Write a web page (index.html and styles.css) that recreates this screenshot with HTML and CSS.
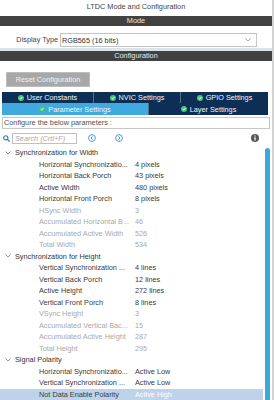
FILE: index.html
```html
<!DOCTYPE html>
<html lang="en">
<head>
  <meta charset="UTF-8" />
  <title>LTDC Mode and Configuration</title>
  <link rel="stylesheet" href="styles.css">
</head>
<body>
<div class="panel">

  <!-- HEADER -->
  <div class="title">LTDC Mode and Configuration</div>
  <div class="bar">Mode</div>
  <div class="mode-row">
    <span class="mode-label">Display Type</span>
    <div class="select">
      <span>RGB565 (16 bits)</span>
      <svg width="6" height="4" viewBox="0 0 6 4"><polyline points="0.5,0.5 3,3 5.5,0.5" fill="none" stroke="#9a9a9a" stroke-width="0.9"/></svg>
    </div>
  </div>
  <div class="strip"></div>
  <div class="bar">Configuration</div>

  <!-- RESET -->
  <div class="reset-row">
    <button class="reset">Reset Configuration</button>
  </div>

  <!-- TABS -->
  <div class="tabs">
    <div class="tab-row top">
      <div class="tab"><svg class="ok" viewBox="0 0 6 6"><circle cx="3" cy="3" r="3" fill="#47c47a"/><polyline points="1.6,3.1 2.7,4.1 4.5,2" fill="none" stroke="#fff" stroke-width="0.9"/></svg>User Constants</div>
      <div class="tab"><svg class="ok" viewBox="0 0 6 6"><circle cx="3" cy="3" r="3" fill="#47c47a"/><polyline points="1.6,3.1 2.7,4.1 4.5,2" fill="none" stroke="#fff" stroke-width="0.9"/></svg>NVIC Settings</div>
      <div class="tab"><svg class="ok" viewBox="0 0 6 6"><circle cx="3" cy="3" r="3" fill="#47c47a"/><polyline points="1.6,3.1 2.7,4.1 4.5,2" fill="none" stroke="#fff" stroke-width="0.9"/></svg>GPIO Settings</div>
    </div>
    <div class="tab-row bottom">
      <div class="tab on"><svg class="ok" viewBox="0 0 6 6"><circle cx="3" cy="3" r="3" fill="#47c47a"/><polyline points="1.6,3.1 2.7,4.1 4.5,2" fill="none" stroke="#fff" stroke-width="0.9"/></svg>Parameter Settings</div>
      <div class="tab"><svg class="ok" viewBox="0 0 6 6"><circle cx="3" cy="3" r="3" fill="#47c47a"/><polyline points="1.6,3.1 2.7,4.1 4.5,2" fill="none" stroke="#fff" stroke-width="0.9"/></svg>Layer Settings</div>
    </div>
  </div>

  <div class="hint">Configure the below parameters :</div>

  <!-- TOOLBAR -->
  <div class="toolbar">
    <svg class="find" width="7" height="7" viewBox="0 0 7 7"><circle cx="2.8" cy="2.8" r="2.1" fill="none" stroke="#2b7fc6" stroke-width="1.1"/><line x1="4.4" y1="4.4" x2="6.6" y2="6.6" stroke="#2b7fc6" stroke-width="1.3"/></svg>
    <div class="search">Search (Crtl+F)</div>
    <svg class="nav prev" width="8" height="8" viewBox="0 0 8 8"><circle cx="4" cy="4" r="3.4" fill="none" stroke="#3b8fd6" stroke-width="0.9"/><polyline points="4.6,2.4 3,4 4.6,5.6" fill="none" stroke="#3b8fd6" stroke-width="0.9"/></svg>
    <svg class="nav next" width="8" height="8" viewBox="0 0 8 8"><circle cx="4" cy="4" r="3.4" fill="none" stroke="#3b8fd6" stroke-width="0.9"/><polyline points="3.4,2.4 5,4 3.4,5.6" fill="none" stroke="#3b8fd6" stroke-width="0.9"/></svg>
    <svg class="info" width="8" height="8" viewBox="0 0 8 8"><circle cx="4" cy="4" r="4" fill="#575757"/><rect x="3.4" y="1.4" width="1.2" height="1.1" fill="#fff"/><rect x="3.4" y="3.2" width="1.2" height="3.3" fill="#fff"/></svg>
  </div>

  <!-- PARAMETER TREE -->
  <div class="tree">
    <div class="rows">
      <div class="grp"><svg width="6" height="4" viewBox="0 0 6 4"><polyline points="0.5,0.5 3,3 5.5,0.5" fill="none" stroke="#777" stroke-width="0.8"/></svg>Synchronization for Width</div>
      <div class="row"><span class="lbl">Horizontal Synchronizatio...</span><span class="val">4 pixels</span></div>
      <div class="row"><span class="lbl">Horizontal Back Porch</span><span class="val">43 pixels</span></div>
      <div class="row"><span class="lbl">Active Width</span><span class="val">480 pixels</span></div>
      <div class="row"><span class="lbl">Horizontal Front Porch</span><span class="val">8 pixels</span></div>
      <div class="row off"><span class="lbl">HSync Width</span><span class="val">3</span></div>
      <div class="row off"><span class="lbl">Accumulated Horizontal B...</span><span class="val">46</span></div>
      <div class="row off"><span class="lbl">Accumulated Active Width</span><span class="val">526</span></div>
      <div class="row off"><span class="lbl">Total Width</span><span class="val">534</span></div>

      <div class="grp"><svg width="6" height="4" viewBox="0 0 6 4"><polyline points="0.5,0.5 3,3 5.5,0.5" fill="none" stroke="#777" stroke-width="0.8"/></svg>Synchronization for Height</div>
      <div class="row"><span class="lbl">Vertical Synchronization ...</span><span class="val">4 lines</span></div>
      <div class="row"><span class="lbl">Vertical Back Porch</span><span class="val">12 lines</span></div>
      <div class="row"><span class="lbl">Active Height</span><span class="val">272 lines</span></div>
      <div class="row"><span class="lbl">Vertical Front Porch</span><span class="val">8 lines</span></div>
      <div class="row off"><span class="lbl">VSync Height</span><span class="val">3</span></div>
      <div class="row off"><span class="lbl">Accumulated Vertical Bac...</span><span class="val">15</span></div>
      <div class="row off"><span class="lbl">Accumulated Active Height</span><span class="val">287</span></div>
      <div class="row off"><span class="lbl">Total Height</span><span class="val">295</span></div>

      <div class="grp"><svg width="6" height="4" viewBox="0 0 6 4"><polyline points="0.5,0.5 3,3 5.5,0.5" fill="none" stroke="#777" stroke-width="0.8"/></svg>Signal Polarity</div>
      <div class="row"><span class="lbl">Horizontal Synchronizatio...</span><span class="val">Active Low</span></div>
      <div class="row"><span class="lbl">Vertical Synchronization ...</span><span class="val">Active Low</span></div>
      <div class="row sel"><span class="lbl">Not Data Enable Polarity</span><span class="val">Active High</span></div>
    </div>
    <div class="scrollbar"></div>
  </div>

</div>
</body>
</html>
```

FILE: styles.css
```css
body {
  margin: 0;
  background: #fff;
  font-family: "Liberation Sans", Arial, sans-serif;
  font-size: 7.3px;
  color: #3a3a3a;
}

.panel {
  width: 272px;
  height: 400px;
  border-right: 2px solid #d2d2d2;
  overflow: hidden;
}

/* HEADER */
.title {
  height: 16px;
  line-height: 14px;
  text-align: center;
  color: #444;
}

.bar {
  height: 10px;
  line-height: 10px;
  background: #414141;
  color: #e6e6e6;
  text-align: center;
}

.mode-row {
  height: 22px;
  box-sizing: border-box;
  padding-top: 7px;
  display: flex;
}

.mode-label {
  width: 58px;
  margin-right: 2px;
  text-align: right;
  line-height: 14px;
  color: #444;
}

.select {
  width: 197px;
  height: 14px;
  box-sizing: border-box;
  border: 1px solid #c4c4c4;
  padding: 0 5px 0 1px;
  display: flex;
  align-items: center;
  justify-content: space-between;
  color: #333;
}

.strip {
  height: 3px;
  background: #dce3ea;
}

/* RESET BUTTON */
.reset-row {
  height: 31px;
  box-sizing: border-box;
  padding: 11px 0 0 6px;
}

.reset {
  width: 84px;
  height: 15px;
  padding: 0;
  background: #a8a8a8;
  border: 1px solid #bcbcbc;
  color: #f2f2f2;
  font: inherit;
}

/* TABS */
.tabs {
  margin-left: 2px;
  width: 266px;
}

.tab-row {
  display: grid;
}

.tab-row.top {
  grid-template-columns: 92px 87px 87px;
  height: 11px;
}

.tab-row.bottom {
  grid-template-columns: 147px 119px;
  height: 12px;
}

.tab {
  background: #0d2f55;
  color: #f4f4f4;
  display: flex;
  align-items: center;
  justify-content: center;
  gap: 3px;
  border-right: 1px solid #51708f;
}

.tab:last-child {
  border-right: none;
}

.tab.on {
  background: #3eaae0;
}

.ok {
  width: 6px;
  height: 6px;
}

.hint {
  margin: 2px 2px 0 2px;
  height: 12px;
  box-sizing: border-box;
  border: 1px solid #c6c6c6;
  line-height: 10px;
  padding-left: 1px;
  color: #505050;
}

/* TOOLBAR */
.toolbar {
  height: 18px;
  display: flex;
  align-items: center;
  padding-left: 3px;
}

.search {
  margin-left: 2px;
  width: 65px;
  height: 11px;
  box-sizing: border-box;
  border: 1px solid #c0c0c0;
  padding-left: 2px;
  line-height: 9px;
  font-style: italic;
  color: #a8a8a8;
}

.nav.prev {
  margin-left: 11px;
}

.nav.next {
  margin-left: 19px;
}

.info {
  margin-left: auto;
  margin-right: 13px;
}

/* TREE */
.tree {
  display: flex;
}

.rows {
  flex: 1;
}

.grp,
.row {
  height: 11.5px;
  line-height: 11.5px;
  display: flex;
  align-items: center;
  white-space: nowrap;
}

.grp {
  padding-left: 5px;
  color: #333;
}

.grp svg {
  margin-right: 4px;
}

.row .lbl {
  margin-left: 39px;
  width: 94px;
  overflow: hidden;
}

.row .val {
  margin-left: 2px;
}

.row.off {
  color: #a9a9a9;
}

.row.sel {
  background: #bed3ea;
}

.row.sel .val {
  color: #fff;
}

.scrollbar {
  width: 5px;
  margin: 1px 2px 0 2px;
  background: #3ba8de;
  border-radius: 3px 3px 0 0;
}
```
